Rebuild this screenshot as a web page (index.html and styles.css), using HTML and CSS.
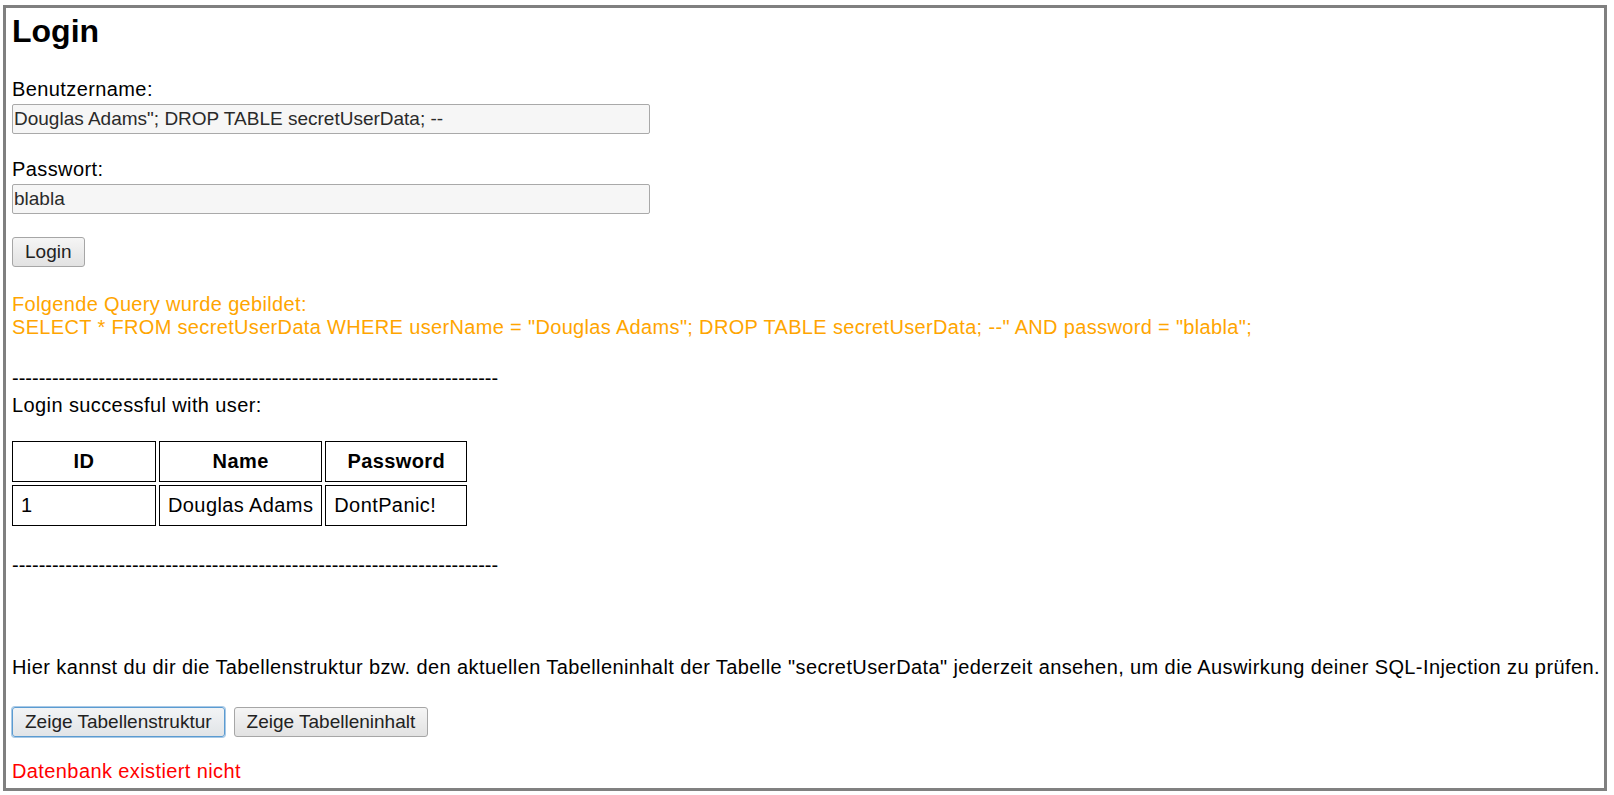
FILE: index.html
```html
<!DOCTYPE html>
<html lang="de">
<head>
<meta charset="utf-8">
<title>Login</title>
<link rel="stylesheet" href="styles.css">
</head>
<body>
<div class="frame">
  <h1 class="title">Login</h1>
  <form class="login-form">
    <label class="field-label" for="user">Benutzername:</label>
    <input id="user" class="text-input" type="text" value="Douglas Adams&quot;; DROP TABLE secretUserData; --">
    <label class="field-label label-gap" for="pw">Passwort:</label>
    <input id="pw" class="text-input" type="text" value="blabla">
    <button type="button" class="btn btn-login">Login</button>
  </form>
  <p class="query">Folgende Query wurde gebildet:<br>SELECT * FROM secretUserData WHERE userName = "Douglas Adams"; DROP TABLE secretUserData; --" AND password = "blabla";</p>
  <div class="divider">-------------------------------------------------------------------------</div>
  <div class="result-label">Login successful with user:</div>
  <table class="user-table">
    <tr><th class="col-id">ID</th><th>Name</th><th>Password</th></tr>
    <tr><td class="col-id">1</td><td>Douglas Adams</td><td>DontPanic!</td></tr>
  </table>
  <div class="divider divider-after">-------------------------------------------------------------------------</div>
  <p class="hint">Hier kannst du dir die Tabellenstruktur bzw. den aktuellen Tabelleninhalt der Tabelle "secretUserData" jederzeit ansehen, um die Auswirkung deiner SQL-Injection zu prüfen.</p>
  <div class="btn-row">
    <button type="button" class="btn btn-focus">Zeige Tabellenstruktur</button>
    <button type="button" class="btn">Zeige Tabelleninhalt</button>
  </div>
  <p class="error">Datenbank existiert nicht</p>
</div>
</body>
</html>
```

FILE: styles.css
```css
html, body {
  margin: 0;
  padding: 0;
  background: #ffffff;
}

body {
  font-family: "Liberation Sans", Arial, sans-serif;
  font-size: 20px;
  line-height: 23px;
  letter-spacing: 0.4px;
  color: #000000;
}

.frame {
  box-sizing: border-box;
  margin: 5px 7px 0 3px;
  height: 786px;
  border: 3px solid #808080;
  padding: 5px 6px 0 6px;
  overflow: hidden;
}

.title {
  margin: 0;
  font-size: 32px;
  line-height: 36px;
  font-weight: bold;
  letter-spacing: 0;
}

.login-form {
  display: flex;
  flex-direction: column;
  align-items: flex-start;
  margin: 0;
}

.field-label {
  display: block;
  margin-top: 29px;
}

.label-gap {
  margin-top: 24px;
}

.text-input {
  box-sizing: border-box;
  margin: 3px 0 0 0;
  width: 638px;
  height: 30px;
  padding: 0 1px;
  border: 1px solid #a9a9a9;
  border-radius: 2px;
  background: #f6f6f6;
  font-family: "Liberation Sans", Arial, sans-serif;
  font-size: 19px;
  letter-spacing: 0;
  color: #2a2a2a;
  outline: none;
}

.btn {
  box-sizing: border-box;
  height: 30px;
  margin: 0;
  padding: 0 12px;
  border: 1px solid #a6a6a6;
  border-radius: 3px;
  background: linear-gradient(#f5f5f5, #e2e2e2);
  font-family: "Liberation Sans", Arial, sans-serif;
  font-size: 19px;
  letter-spacing: 0;
  color: #222222;
}

.btn-login {
  margin-top: 23px;
}

.btn-focus {
  border-color: #5b9bd1;
  box-shadow: 0 0 0 1px #a8c9e6;
  background: linear-gradient(#f2f4f6, #e1e4e7);
}

.query {
  margin: 26px 0 0 0;
  color: #ffa500;
  letter-spacing: 0.34px;
}

.divider {
  margin-top: 28px;
  white-space: nowrap;
  letter-spacing: 0;
}

.divider-after {
  margin-top: 25px;
}

.result-label {
  margin-top: 4px;
}

.user-table {
  margin: 21px 0 0 -3px;
  border-collapse: separate;
  border-spacing: 3px 3px;
}

.user-table th,
.user-table td {
  min-width: 124px;
  padding: 8px;
  border: 1px solid #000000;
  line-height: 23px;
}

.user-table .col-id {
  min-width: 126px;
}

.user-table th {
  text-align: center;
  font-weight: bold;
}

.user-table td {
  text-align: left;
}

.hint {
  margin: 79px 0 0 0;
  white-space: nowrap;
}

.btn-row {
  display: flex;
  gap: 9px;
  margin-top: 28px;
}

.error {
  margin: 23px 0 0 0;
  color: #ff0000;
}
```
